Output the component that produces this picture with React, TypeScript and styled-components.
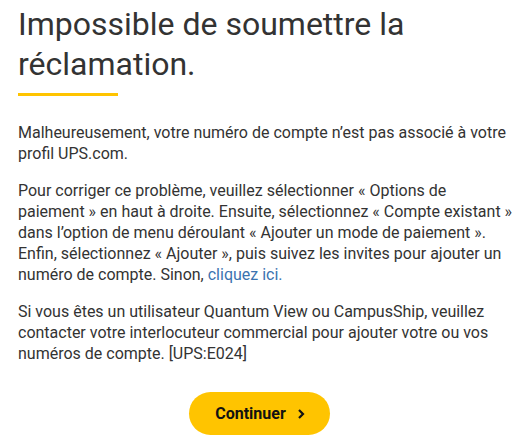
import styled, { createGlobalStyle } from 'styled-components';

const GlobalStyle = createGlobalStyle`
  body {
    margin: 0;
    background: #fff;
    font-family: Roboto, "Liberation Sans", sans-serif;
    color: #333;
  }
`;

const Container = styled.div`
  padding: 4px 6px 12px 18px;
  display: flex;
  flex-direction: column;
`;

const Title = styled.h1`
  font-size: 32px;
  font-weight: 400;
  line-height: 40px;
  margin: 0;
  color: #333;
`;

const Underline = styled.div`
  width: 100px;
  height: 3px;
  background: #ffc400;
  margin: 9px 0 26px;
`;

const Paragraph = styled.p`
  font-size: 16px;
  line-height: 21px;
  margin: 0 0 16px;
  color: #333;
`;

const LinkText = styled.a`
  color: #3b73b0;
  text-decoration: none;
`;

const Actions = styled.div`
  display: flex;
  justify-content: center;
  margin: 12px 0 0 -12px;
`;

const Button = styled.button`
  display: flex;
  align-items: center;
  gap: 10px;
  height: 43px;
  padding: 0 24px 0 26px;
  border: none;
  border-radius: 22px;
  background: #ffc400;
  color: #121212;
  font-family: Roboto, "Liberation Sans", sans-serif;
  font-size: 16px;
  font-weight: 700;
  cursor: pointer;
`;

function App() {
  return (
    <>
      <GlobalStyle />
      <Container>
        <Title>Impossible de soumettre la réclamation.</Title>
        <Underline />
        <Paragraph>
          Malheureusement, votre numéro de compte n’est pas associé à votre
          profil UPS.com.
        </Paragraph>
        <Paragraph>
          Pour corriger ce problème, veuillez sélectionner « Options de
          paiement » en haut à droite. Ensuite, sélectionnez « Compte existant »
          dans l’option de menu déroulant « Ajouter un mode de paiement ».
          Enfin, sélectionnez « Ajouter », puis suivez les invites pour ajouter
          un numéro de compte. Sinon, <LinkText href="#">cliquez ici.</LinkText>
        </Paragraph>
        <Paragraph>
          Si vous êtes un utilisateur Quantum View ou CampusShip, veuillez
          contacter votre interlocuteur commercial pour ajouter votre ou vos
          numéros de compte. [UPS:E024]
        </Paragraph>
        <Actions>
          <Button>
            Continuer
            <svg width="10" height="12" viewBox="0 0 10 12">
              <path d="M3 2l4 4-4 4" fill="none" stroke="#121212" strokeWidth="2.2" />
            </svg>
          </Button>
        </Actions>
      </Container>
    </>
  );
}

export default App;
